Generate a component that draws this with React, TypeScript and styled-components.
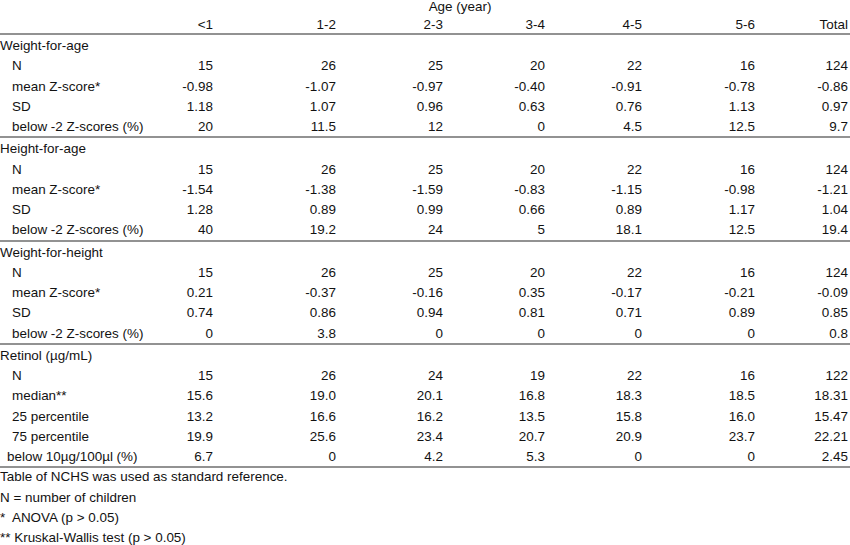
import React from "react";
import styled, { createGlobalStyle } from "styled-components";

const GlobalStyle = createGlobalStyle`
  html, body { margin: 0; padding: 0; background: #ffffff; }
  body {
    font-family: "Liberation Sans", Arial, Helvetica, sans-serif;
    color: #121212;
  }
`;

const COLS = "150px 63px 123px 107px 102px 97px 113px 93px";
const ROW_H = 20.25;

const Page = styled.div`
  width: 850px;
  height: 545px;
  overflow: hidden;
  font-size: 13.45px;
`;

const HeaderBlock = styled.div`
  height: 33px;
  border-bottom: 2px solid #929292;
`;

const Spanner = styled.div`
  margin-left: 70px;
  height: 17px;
  line-height: 13px;
  text-align: center;
`;

const Grid = styled.div`
  display: grid;
  grid-template-columns: ${COLS};
`;

const HeadRow = styled(Grid)`
  height: 16px;
  line-height: 13px;
  padding-top: 1px;
  box-sizing: border-box;
`;

const Section = styled.div`
  border-bottom: 2px solid #929292;
`;

const Row = styled(Grid)`
  height: ${ROW_H}px;
  line-height: ${ROW_H}px;
  padding-top: 1px;
  box-sizing: border-box;
`;

const Label = styled.div<{ $indent: number }>`
  padding-left: ${(p) => p.$indent}px;
  white-space: nowrap;
`;

const Num = styled.div`
  text-align: right;
  white-space: nowrap;
`;

const SectionTitle = styled.div`
  height: ${ROW_H}px;
  line-height: ${ROW_H}px;
  padding-top: 1px;
  box-sizing: border-box;
  white-space: nowrap;
`;

const Notes = styled.div`
  margin-top: -1px;
`;

const Note = styled.div`
  height: ${ROW_H}px;
  line-height: ${ROW_H}px;
  white-space: pre;
`;

type DataRow = { label: string; indent?: number; values: string[] };
type SectionData = { title: string; rows: DataRow[] };

const headers = ["<1", "1-2", "2-3", "3-4", "4-5", "5-6", "Total"];

const sections: SectionData[] = [
  {
    title: "Weight-for-age",
    rows: [
      { label: "N", values: ["15", "26", "25", "20", "22", "16", "124"] },
      { label: "mean Z-score*", values: ["-0.98", "-1.07", "-0.97", "-0.40", "-0.91", "-0.78", "-0.86"] },
      { label: "SD", values: ["1.18", "1.07", "0.96", "0.63", "0.76", "1.13", "0.97"] },
      { label: "below -2 Z-scores (%)", values: ["20", "11.5", "12", "0", "4.5", "12.5", "9.7"] },
    ],
  },
  {
    title: "Height-for-age",
    rows: [
      { label: "N", values: ["15", "26", "25", "20", "22", "16", "124"] },
      { label: "mean Z-score*", values: ["-1.54", "-1.38", "-1.59", "-0.83", "-1.15", "-0.98", "-1.21"] },
      { label: "SD", values: ["1.28", "0.89", "0.99", "0.66", "0.89", "1.17", "1.04"] },
      { label: "below -2 Z-scores (%)", values: ["40", "19.2", "24", "5", "18.1", "12.5", "19.4"] },
    ],
  },
  {
    title: "Weight-for-height",
    rows: [
      { label: "N", values: ["15", "26", "25", "20", "22", "16", "124"] },
      { label: "mean Z-score*", values: ["0.21", "-0.37", "-0.16", "0.35", "-0.17", "-0.21", "-0.09"] },
      { label: "SD", values: ["0.74", "0.86", "0.94", "0.81", "0.71", "0.89", "0.85"] },
      { label: "below -2 Z-scores (%)", values: ["0", "3.8", "0", "0", "0", "0", "0.8"] },
    ],
  },
  {
    title: "Retinol (\u00b5g/mL)",
    rows: [
      { label: "N", values: ["15", "26", "24", "19", "22", "16", "122"] },
      { label: "median**", values: ["15.6", "19.0", "20.1", "16.8", "18.3", "18.5", "18.31"] },
      { label: "25 percentile", values: ["13.2", "16.6", "16.2", "13.5", "15.8", "16.0", "15.47"] },
      { label: "75 percentile", values: ["19.9", "25.6", "23.4", "20.7", "20.9", "23.7", "22.21"] },
      { label: "below 10\u00b5g/100\u00b5l (%)", indent: 7, values: ["6.7", "0", "4.2", "5.3", "0", "0", "2.45"] },
    ],
  },
];

const notes = [
  "Table of NCHS was used as standard reference.",
  "N = number of children",
  "*  ANOVA (p > 0.05)",
  "** Kruskal-Wallis test (p > 0.05)",
];

export default function App() {
  return (
    <Page>
      <GlobalStyle />
      <HeaderBlock>
        <Spanner>Age (year)</Spanner>
        <HeadRow>
          <Label $indent={0} />
          {headers.map((h) => (
            <Num key={h}>{h}</Num>
          ))}
        </HeadRow>
      </HeaderBlock>
      {sections.map((s) => (
        <Section key={s.title}>
          <SectionTitle>{s.title}</SectionTitle>
          {s.rows.map((r) => (
            <Row key={r.label}>
              <Label $indent={r.indent ?? 12}>{r.label}</Label>
              {r.values.map((v, i) => (
                <Num key={i}>{v}</Num>
              ))}
            </Row>
          ))}
        </Section>
      ))}
      <Notes>
        {notes.map((n) => (
          <Note key={n}>{n}</Note>
        ))}
      </Notes>
    </Page>
  );
}
